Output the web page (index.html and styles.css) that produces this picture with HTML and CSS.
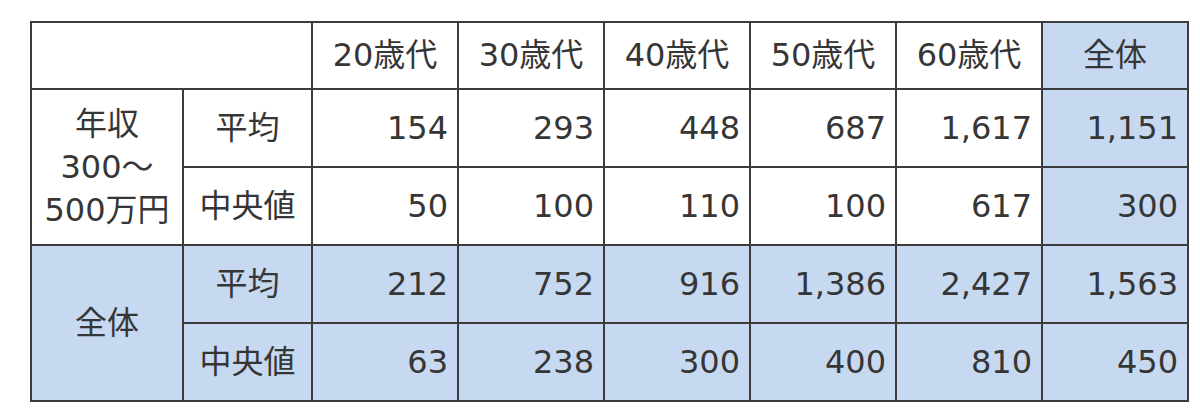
FILE: index.html
```html
<!DOCTYPE html>
<html lang="ja">
<head>
<meta charset="utf-8">
<title>年収別 金融資産</title>
<link rel="stylesheet" href="styles.css">
</head>
<body>
<div class="wrap">
<table class="tbl">
  <colgroup>
    <col class="c-group"><col class="c-label">
    <col class="c-num"><col class="c-num"><col class="c-num"><col class="c-num"><col class="c-num"><col class="c-num">
  </colgroup>
  <tr class="r-head">
    <th colspan="2"></th>
    <th>20歳代</th><th>30歳代</th><th>40歳代</th><th>50歳代</th><th>60歳代</th><th class="blue">全体</th>
  </tr>
  <tr class="r-a">
    <th rowspan="2" class="grp">年収<br>300～<br>500万円</th>
    <th>平均</th>
    <td>154</td><td>293</td><td>448</td><td>687</td><td>1,617</td><td class="blue">1,151</td>
  </tr>
  <tr class="r-b">
    <th>中央値</th>
    <td>50</td><td>100</td><td>110</td><td>100</td><td>617</td><td class="blue">300</td>
  </tr>
  <tr class="r-b blue">
    <th rowspan="2" class="grp">全体</th>
    <th>平均</th>
    <td>212</td><td>752</td><td>916</td><td>1,386</td><td>2,427</td><td>1,563</td>
  </tr>
  <tr class="r-b blue">
    <th>中央値</th>
    <td>63</td><td>238</td><td>300</td><td>400</td><td>810</td><td>450</td>
  </tr>
</table>
</div>
</body>
</html>
```

FILE: styles.css
```css
html, body {
  margin: 0;
  padding: 0;
  background: #ffffff;
}

.wrap {
  padding: 21px 0 0 30px;
}

.tbl {
  border-collapse: collapse;
  table-layout: fixed;
  width: 1158px;
  font-family: "DejaVu Sans", "Noto Sans CJK JP", sans-serif;
  font-size: 32px;
  color: #363636;
}

.c-group { width: 152px; }
.c-label { width: 129px; }
.c-num { width: 146px; }

.tbl th,
.tbl td {
  border: 2px solid #3c3c3c;
  padding: 0 9px;
  font-weight: normal;
  line-height: 43px;
  vertical-align: middle;
  white-space: nowrap;
}

.tbl th {
  text-align: center;
}

.tbl td {
  text-align: right;
}

.r-head { height: 67px; }
.r-a { height: 78px; }
.r-b { height: 78px; }

.grp {
  padding: 0;
}

.blue,
.blue th,
.blue td {
  background: #c6d9f1;
}
```
